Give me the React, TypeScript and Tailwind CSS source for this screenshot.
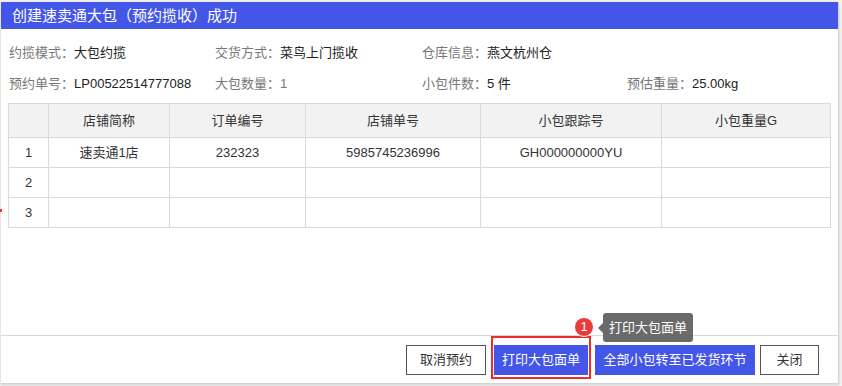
import React from "react";

const FONT = { fontFamily: '"Liberation Sans", "Noto Sans CJK SC", sans-serif' };

const info = [
  [
    ["约揽模式：", "大包约揽"],
    ["交货方式：", "菜鸟上门揽收"],
    ["仓库信息：", "燕文杭州仓"],
    null,
  ],
  [
    ["预约单号：", "LP00522514777088"],
    ["大包数量：", "1", true],
    ["小包件数：", "5 件"],
    ["预估重量：", "25.00kg"],
  ],
] as const;

const cols = ["", "店铺简称", "订单编号", "店铺单号", "小包跟踪号", "小包重量G"];
const widths = [40, 121, 136, 175, 181, 169];
const rows = [
  ["1", "速卖通1店", "232323", "5985745236996", "GH000000000YU", ""],
  ["2", "", "", "", "", ""],
  ["3", "", "", "", "", ""],
];

export default function App() {
  return (
    <div className="relative w-[842px] h-[386px] overflow-hidden bg-[#f3f3f3]" style={FONT}>
      {/* stray marker on the left edge */}
      <div className="absolute left-0 top-[209px] w-[2px] h-[3px] bg-[#e53935]" />

      <div className="ml-px mt-[2px] w-[838px] h-[382px] bg-white border-r border-b border-[#d4d4d4] shadow-[0_1px_3px_rgba(0,0,0,0.15)] flex flex-col">
        <div className="h-[27px] bg-[#4456e8] text-white text-[15px] leading-[27px] pl-[11px]">
          创建速卖通大包（预约揽收）成功
        </div>

        <div className="pt-[8px] pl-[8px]">
          {info.map((row, ri) => (
            <div key={ri} className="grid grid-cols-[206px_207px_205px_1fr] h-[31px] items-center text-[13px]">
              {row.map((cell, ci) => (
                <div key={ci} className="whitespace-nowrap">
                  {cell && (
                    <>
                      <span className="text-[#777]">{cell[0]}</span>
                      <span className={cell.length > 2 ? "text-[#777]" : "text-[#222]"}>{cell[1]}</span>
                    </>
                  )}
                </div>
              ))}
            </div>
          ))}
        </div>

        <div className="mt-[4px] ml-[7px]">
          <table className="table-fixed border-collapse w-[822px] text-[13px] text-[#333]">
            <colgroup>
              {widths.map((w, i) => (
                <col key={i} style={{ width: w }} />
              ))}
            </colgroup>
            <thead>
              <tr className="h-[34px] bg-[#f2f2f2]">
                {cols.map((c, i) => (
                  <th key={i} className="border border-[#dadada] font-normal text-center p-0">
                    {c}
                  </th>
                ))}
              </tr>
            </thead>
            <tbody>
              {rows.map((r, ri) => (
                <tr key={ri} className="h-[30px]">
                  {r.map((c, ci) => (
                    <td key={ci} className="border border-[#dadada] text-center p-0">
                      {c}
                    </td>
                  ))}
                </tr>
              ))}
            </tbody>
          </table>
        </div>

        <div className="flex-1" />

        <div className="border-t border-[#d9d9d9] h-[48px] flex items-start justify-end pt-[9px] pr-[19px] text-[13px]">
          <button className="w-[80px] h-[30px] border border-[#555] bg-white text-[#333]">取消预约</button>
          <div className="relative ml-[8px]">
            <button className="w-[94px] h-[30px] bg-[#4456e8] text-white">打印大包面单</button>
            {/* highlight frame */}
            <div className="absolute left-[-3px] right-[-3px] top-[-9px] bottom-[-4px] border-[2px] border-[#f02b2b]" />
            {/* step badge */}
            <div className="absolute left-[80px] top-[-28px] w-[20px] h-[20px] rounded-full bg-[#ea3a3a] border border-white text-white text-[13px] leading-[18px] text-center">
              1
            </div>
            {/* tooltip */}
            <div className="absolute left-[109px] top-[-32px] h-[29px] w-[90px] rounded-[3px] bg-[#6a6a6a] text-white text-[13px] leading-[29px] text-center whitespace-nowrap">
              打印大包面单
              <div className="absolute left-[-5px] top-[10px] w-0 h-0 border-y-[5px] border-y-transparent border-r-[5px] border-r-[#6a6a6a]" />
            </div>
          </div>
          <button className="ml-[7px] w-[160px] h-[30px] bg-[#4456e8] text-white whitespace-nowrap">
            全部小包转至已发货环节
          </button>
          <button className="ml-[5px] w-[59px] h-[30px] border border-[#555] bg-white text-[#333]">关闭</button>
        </div>
      </div>
    </div>
  );
}
